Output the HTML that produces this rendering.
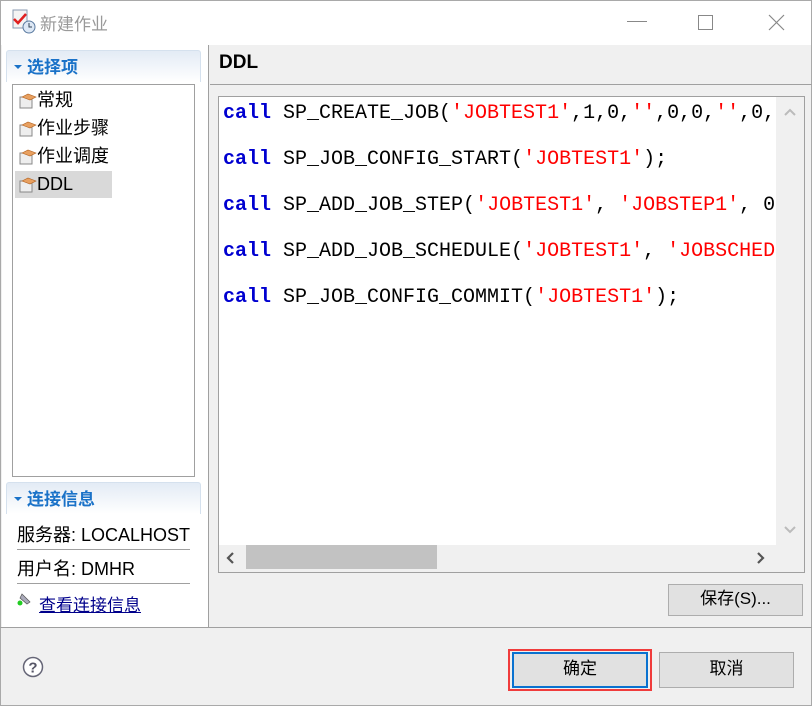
<!DOCTYPE html>
<html><head><meta charset="utf-8">
<style>
*{margin:0;padding:0;box-sizing:border-box}
body{width:812px;height:706px;overflow:hidden;background:#f0f0f0;font-family:"Liberation Sans","Noto Sans CJK SC",sans-serif;position:relative}
.abs{position:absolute}
.win{left:0;top:0;width:812px;height:706px;border:1px solid #a9a9a9}
.title{left:1px;top:1px;width:810px;height:44px;background:#fff}
.ttl{left:40px;top:10px;font-size:17px;color:#999}
.left{left:2px;top:45px;width:207px;height:582px;background:#fff;border-right:1px solid #a0a0a0}
.hdr{left:6px;width:195px;height:32px;border:1px solid #d5e1ee;border-bottom:none;border-radius:3px 3px 0 0;background:linear-gradient(#e3ebf5,#fff);color:#1a72c8;font-weight:bold;font-size:17px;padding:2px 0 0 20px}
.hdr:before{content:"";position:absolute;left:7px;top:14px;border-left:4px solid transparent;border-right:4px solid transparent;border-top:4px solid #1a72c8}
.tree{left:12px;top:84px;width:183px;height:393px;border:1px solid #a0a0a0;background:#fff}
.it{position:absolute;left:2px;height:27px;font-size:18px;line-height:27px;padding:0 0 0 22px;color:#000}
.it svg{position:absolute;left:4px;top:6px}
.sel{background:#d9d9d9;width:97px}
.info{left:17px;font-size:18px;color:#000}
.ln{left:17px;width:173px;height:1px;background:#a0a0a0}
.code{left:218px;top:96px;width:587px;height:477px;border:1px solid #a0a0a0;background:#fff;overflow:hidden}
.pre{position:absolute;left:4px;top:-6px;font-family:"Liberation Mono",monospace;font-size:20px;line-height:46px;white-space:pre;color:#000;width:553px;overflow:hidden}
.k{color:#0000d0;font-weight:bold}
.s{color:#f00}
.btn{background:#e1e1e1;border:1px solid #adadad;font-size:17px;text-align:center;color:#000}
</style></head><body>
<div class="abs win"></div>
<div class="abs title"></div>
<svg class="abs" style="left:10px;top:8px" width="26" height="26" viewBox="0 0 26 26"><rect x="3" y="2" width="14" height="18" fill="#f4f4f4" stroke="#8a9ab0"/><path d="M4 11l4 4 8-9" stroke="#e02020" stroke-width="2.5" fill="none"/><circle cx="19" cy="19" r="6" fill="#dde8f5" stroke="#5a7aa0"/><path d="M19 15v4h3" stroke="#345" fill="none"/></svg>
<div class="abs ttl">新建作业</div>
<svg class="abs" style="left:627px;top:21px" width="20" height="2"><rect width="20" height="1" fill="#888"/></svg>
<div class="abs" style="left:698px;top:15px;width:15px;height:15px;border:1px solid #888"></div>
<svg class="abs" style="left:768px;top:14px" width="17" height="17"><path d="M1 1L16 16M16 1L1 16" stroke="#888" stroke-width="1.2"/></svg>

<div class="abs left"></div>
<div class="abs hdr" style="top:50px">选择项</div>
<div class="abs tree">
 <div class="it" style="top:2px"><svg width="18" height="16"><rect x="1" y="4" width="12" height="11" fill="#eee" stroke="#888"/><path d="M3 4l6-3 8 3-6 3z" fill="#e8a060" stroke="#b06020" stroke-width=".6"/></svg>常规</div>
 <div class="it" style="top:30px"><svg width="18" height="16"><rect x="1" y="4" width="12" height="11" fill="#eee" stroke="#888"/><path d="M3 4l6-3 8 3-6 3z" fill="#e8a060" stroke="#b06020" stroke-width=".6"/></svg>作业步骤</div>
 <div class="it" style="top:58px"><svg width="18" height="16"><rect x="1" y="4" width="12" height="11" fill="#eee" stroke="#888"/><path d="M3 4l6-3 8 3-6 3z" fill="#e8a060" stroke="#b06020" stroke-width=".6"/></svg>作业调度</div>
 <div class="it sel" style="top:86px"><svg width="18" height="16"><rect x="1" y="4" width="12" height="11" fill="#eee" stroke="#888"/><path d="M3 4l6-3 8 3-6 3z" fill="#e8a060" stroke="#b06020" stroke-width=".6"/></svg>DDL</div>
</div>
<div class="abs hdr" style="top:482px">连接信息</div>
<div class="abs info" style="top:521px">服务器: LOCALHOST</div>
<div class="abs ln" style="top:549px"></div>
<div class="abs info" style="top:555px">用户名: DMHR</div>
<div class="abs ln" style="top:583px"></div>
<svg class="abs" style="left:16px;top:590px" width="20" height="18"><path d="M6 4l8 8-3 2-7-6z" fill="#aab" stroke="#555" stroke-width=".7"/><circle cx="4" cy="13" r="2.5" fill="#2c2"/></svg>
<div class="abs" style="left:39px;top:591px;font-size:17px;color:#00008b;text-decoration:underline">查看连接信息</div>

<div class="abs" style="left:219px;top:52px;font-size:19px;font-weight:bold">DDL</div>
<div class="abs" style="left:210px;top:84px;width:602px;height:1px;background:#a0a0a0"></div>
<div class="abs code">
<div class="pre"><span class="k">call</span> SP_CREATE_JOB(<span class="s">'JOBTEST1'</span>,1,0,<span class="s">''</span>,0,0,<span class="s">''</span>,0,<span class="s">'',</span>
<span class="k">call</span> SP_JOB_CONFIG_START(<span class="s">'JOBTEST1'</span>);
<span class="k">call</span> SP_ADD_JOB_STEP(<span class="s">'JOBTEST1'</span>, <span class="s">'JOBSTEP1'</span>, 0,
<span class="k">call</span> SP_ADD_JOB_SCHEDULE(<span class="s">'JOBTEST1'</span>, <span class="s">'JOBSCHEDULE'</span>
<span class="k">call</span> SP_JOB_CONFIG_COMMIT(<span class="s">'JOBTEST1'</span>);</div>
<div class="abs" style="left:557px;top:0;width:28px;height:448px;background:#f0f0f0"></div>
<svg class="abs" style="left:564px;top:10px" width="14" height="10"><path d="M2 8l5-5 5 5" stroke="#bbb" stroke-width="2" fill="none"/></svg>
<svg class="abs" style="left:564px;top:428px" width="14" height="10"><path d="M2 2l5 5 5-5" stroke="#bbb" stroke-width="2" fill="none"/></svg>
<div class="abs" style="left:0;top:448px;width:585px;height:27px;background:#f0f0f0"></div>
<div class="abs" style="left:27px;top:448px;width:191px;height:24px;background:#c2c2c2"></div>
<svg class="abs" style="left:6px;top:454px" width="12" height="14"><path d="M8 2L3 7l5 5" stroke="#555" stroke-width="2.2" fill="none"/></svg>
<svg class="abs" style="left:536px;top:454px" width="12" height="14"><path d="M3 2l5 5-5 5" stroke="#555" stroke-width="2.2" fill="none"/></svg>
</div>
<div class="abs btn" style="left:668px;top:584px;width:135px;height:32px;line-height:28px">保存(S)...</div>
<div class="abs" style="left:0;top:627px;width:812px;height:1px;background:#a0a0a0"></div>
<svg class="abs" style="left:22px;top:656px" width="22" height="22"><circle cx="11" cy="11" r="9.5" fill="#fff" stroke="#667" stroke-width="1.5"/><text x="11" y="16.5" font-size="15" font-weight="bold" text-anchor="middle" fill="#556" font-family="Liberation Sans">?</text></svg>
<div class="abs" style="left:508px;top:649px;width:144px;height:42px;border:2px solid #f03c3c"></div>
<div class="abs btn" style="left:512px;top:652px;width:136px;height:36px;border:2px solid #0a72d0;line-height:29px">确定</div>
<div class="abs btn" style="left:659px;top:652px;width:135px;height:36px;line-height:31px">取消</div>
</body></html>
